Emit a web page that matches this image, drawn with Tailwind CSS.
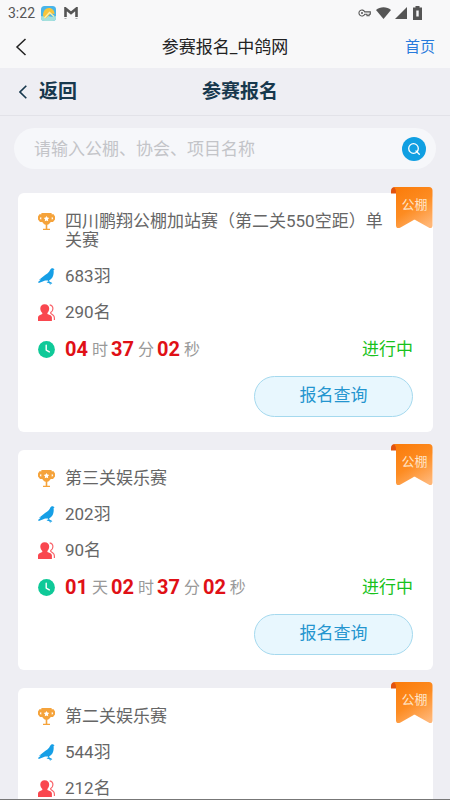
<!DOCTYPE html>
<html lang="zh-CN">
<head>
<meta charset="utf-8">
<meta name="viewport" content="width=device-width, initial-scale=1">
<title>参赛报名_中鸽网</title>
<script src="https://cdn.jsdelivr.net/npm/@tailwindcss/browser@4"></script>
</head>
<body class="flex h-screen flex-col overflow-hidden bg-[#eeeef3] font-['Roboto','Noto_Sans_CJK_SC',sans-serif] text-[17px] text-[#666]">

<svg class="absolute size-0" aria-hidden="true">
  <defs>
    <linearGradient id="ribbon-fill" x1="0.2" y1="0" x2="0.8" y2="1">
      <stop offset="0" stop-color="#fb7d0c"/><stop offset="0.5" stop-color="#fd8c22"/><stop offset="1" stop-color="#ffb676"/>
    </linearGradient>
  </defs>
  <symbol id="trophy" viewBox="0 0 17 17">
    <path fill="#f5a33b" fill-rule="evenodd" d="M3.400 0h10.200v1.200h2L17 3.600v3L15 9h-2.300c-.9 1.600-1.900 2.400-3.400 2.700v4h2.700V17H5v-1.300h2.700v-4C6.200 11.400 5.200 10.600 4.300 9H2L0 6.600v-3l1.400-2.400h2zM2.600 4.200l-.8 1.100.9 1.100h.6V4.200zM13.700 4.200v2.200h.6l.9-1.100-.8-1.100zM8.500 2.900l-.9 1.700-1.900.3 1.400 1.400-.3 2 1.700-.9 1.700.9-.3-2 1.400-1.400-1.900-.3z"/>
  </symbol>
  <symbol id="pigeon" viewBox="0 0 17 17">
    <path fill="#169fe6" d="M12.200 1.800C12.600.5 13.800 0 14.900.2l1.700 1-1 .9c.3 2.700 0 5.600-1.400 7.700-.8 1.200-1.900 2-3 2.500l.4 1.500 2 .6.700 1.500-.8-.1-.8-.8.1 1.600h-.9l-.5-1.400-2.600-.7.1-.8 1.500.1-.5-1.200c-1.500.2-3.200-.1-4.600.6L.8 14.900 0 13.900l3-2.300-2.200.3 4.700-3.700c2.500-2 5.600-3.200 6.700-6.400z"/>
  </symbol>
  <symbol id="people" viewBox="0 0 17 17">
    <path fill="#f9474f" d="M6.600.2c2.900 0 4.600 1.800 4.600 4.400 0 1.900-.7 3.400-1.800 4.400v.9l3 1.300c1.200.6 1.500 1.600 1.500 2.600v3.100H0v-3.100c0-1.200.5-2.100 1.500-2.600l2.800-1.300V9C3.100 8 2.300 6.500 2.300 4.600 2.300 2 4 .2 6.600.2z"/>
    <path fill="none" stroke="#f9656b" stroke-width="1.200" d="M11.700.9c2 .4 3.200 1.800 3.200 3.900 0 1.700-.9 3-2.200 3.800l.1.900 2.100 1.400c1 .7 1.500 1.800 1.500 3v2"/>
  </symbol>
  <symbol id="clock" viewBox="0 0 17 17">
    <circle cx="8.500" cy="8.500" r="8.400" fill="#0fc998"/>
    <path fill="none" stroke="#fff" stroke-width="1.400" stroke-linecap="round" stroke-linejoin="round" d="M8.200 4.300v4.800l3.100 1.800"/>
  </symbol>
  <symbol id="ribbon" viewBox="0 0 42 42">
    <path fill="#e2530f" d="M0 6.500V4c0-2.500 1.500-4 4-4h4v6.500z"/>
    <path fill="url(#ribbon-fill)" d="M2.500 0H38c2.200 0 3.500 1.300 3.500 3.500v35c0 2.400-2 3.200-3.800 2l-13-7.300c-.8-.5-1.600-.5-2.400 0l-12.800 7.300C7 41.700 5 41 5 38.500V6c0-3-.5-5-2.500-6z"/>
  </symbol>
</svg>

<div class="flex h-[26px] shrink-0 items-center justify-between bg-[#f8f8f9] pl-2 pr-7 text-[14px] text-[#555]">
  <div class="flex items-center gap-[6px]">
    <span class="leading-[26px]">3:22</span>
    <svg class="size-[15px]" viewBox="0 0 15 15" aria-hidden="true"><rect width="15" height="15" rx="3.500" fill="#48b5ea"/><path d="M0 10c3 1 4-1 7 0s5 1 8 0v1.500A3.500 3.500 0 0 1 11.500 15h-8A3.500 3.500 0 0 1 0 11.500z" fill="#a5e0dc"/><path d="M2 9.500c0-4.500 2.500-7.500 6-7.500 3.200 0 5.500 2.500 5.500 6L10 7.500l-5.500 5z" fill="#f7c53c"/><path d="m3.500 12 5-5.500 4.500 4" fill="none" stroke="#fff0a8" stroke-width="1.300"/></svg>
    <svg class="ml-[2px] h-3 w-[14px]" viewBox="0 0 14 12" aria-hidden="true"><path d="M1.500 10V1.500L7 6l5.500-4.500V10" fill="none" stroke="#555" stroke-width="2.600"/><path d="M.5 11.500h2M11.500 11.500h2" stroke="#aaa"/></svg>
  </div>
  <div class="flex items-center gap-1">
    <svg class="mr-px h-2 w-[13px]" viewBox="0 0 13 8" aria-hidden="true"><path d="M6.700 2.900h5.600v2.300h-1.200v1.500H9V5.200H6.700a3 3 0 1 1 0-2.300z" fill="none" stroke="#555" stroke-width="1.100"/><circle cx="4" cy="4" r="1" fill="#555"/></svg>
    <svg class="h-3 w-[15px]" viewBox="0 0 15 12" aria-hidden="true"><path d="M0 3C4-.7 11-.7 15 3L7.500 12z" fill="#555"/></svg>
    <svg class="size-3" viewBox="0 0 12 12" aria-hidden="true"><path d="M12 0v12H0z" fill="#555"/></svg>
    <svg class="ml-[2px] h-[14px] w-[9px]" viewBox="0 0 9 14" aria-hidden="true"><path fill="#555" fill-rule="evenodd" d="M2.500 0h4v1.500H9V14H0V1.500h2.500zM3.300 4.500v6h2.400v-6z"/></svg>
  </div>
</div>

<nav class="grid h-[42px] shrink-0 grid-cols-[1fr_auto_1fr] items-center bg-[#f8f8f9] px-[15px] text-[#222]">
  <button type="button" aria-label="后退" class="justify-self-start">
    <svg class="h-[18px] w-3" viewBox="0 0 12 18" fill="none" stroke="#222" stroke-width="1.500" aria-hidden="true"><path d="M10.500 1 2 9l8.500 8"/></svg>
  </button>
  <span class="leading-6">参赛报名_中鸽网</span>
  <a href="#" class="justify-self-end text-[15px] leading-6 text-[#287bdc]">首页</a>
</nav>

<header class="grid h-12 shrink-0 grid-cols-[1fr_auto_1fr] items-center border-b border-[#e2e2e8] px-[19px] text-[19px] font-bold text-[#17384d]">
  <a href="#" class="flex items-center gap-3 justify-self-start leading-6">
    <svg class="h-[14px] w-2" viewBox="0 0 8 14" fill="none" stroke="#17384d" stroke-width="1.600" aria-hidden="true"><path d="M7.300.7 1 7l6.300 6.300"/></svg>
    返回
  </a>
  <h1 class="pl-[30px] leading-6">参赛报名</h1>
</header>

<main class="min-h-0 flex-1 overflow-hidden border-b border-[#777]">
  <form class="mx-[14px] mt-3 flex h-[41px] items-center rounded-full bg-[#f6f7fa] pl-5 pr-[10px]">
    <input type="search" aria-label="搜索" placeholder="请输入公棚、协会、项目名称" class="h-full min-w-0 flex-1 bg-transparent outline-none placeholder:text-[#c3c4c8]">
    <button type="button" aria-label="搜索" class="flex size-6 items-center justify-center rounded-full bg-[#109fe2]">
      <svg class="size-3" viewBox="0 0 12 12" fill="none" stroke="#fff" stroke-width="1.300" stroke-linecap="round" aria-hidden="true"><circle cx="5.500" cy="5.500" r="4.800"/><path d="m8 8 3.300 3.300"/></svg>
    </button>
  </form>

  <div class="ml-[18px] mr-[17px] mt-6 flex flex-col gap-[18px]">
    <article class="relative rounded-md bg-white px-5 pb-[15px] pt-[19px]">
      <div class="absolute -top-[6px] right-0 size-[42px]">
        <svg class="size-full" aria-hidden="true"><use href="#ribbon"/></svg>
        <span class="absolute inset-x-0 top-[9px] pl-[5px] text-center text-[13px] leading-[18px] text-[#ffe3c4]">公棚</span>
      </div>
      <div class="flex flex-col gap-[17px] leading-[19px]">
        <div class="flex gap-[10px] pr-6"><svg class="mt-px size-[17px] shrink-0" aria-hidden="true"><use href="#trophy"/></svg><h2>四川鹏翔公棚加站赛（第二关550空距）单关赛</h2></div>
        <div class="flex items-center gap-[10px]"><svg class="size-[17px]" aria-hidden="true"><use href="#pigeon"/></svg><p>683羽</p></div>
        <div class="flex items-center gap-[10px]"><svg class="size-[17px]" aria-hidden="true"><use href="#people"/></svg><p>290名</p></div>
        <div class="flex items-center gap-[10px] leading-[21px]"><svg class="size-[17px]" aria-hidden="true"><use href="#clock"/></svg>
          <p class="flex gap-[3px] text-[16px] text-[#999]"><b class="pr-px text-[20px] text-[#e01016]">04</b>时<b class="pr-px text-[20px] text-[#e01016]">37</b>分<b class="pr-px text-[20px] text-[#e01016]">02</b>秒</p>
          <p class="ml-auto text-[#18c21c]">进行中</p></div>
      </div>
      <button type="button" class="ml-auto mt-4 block h-[41px] w-[159px] rounded-full border border-[#a5d9ee] bg-[#e8f7fe] pb-[2px] text-[#2495cf]">报名查询</button>
    </article>

    <article class="relative rounded-md bg-white px-5 pb-[15px] pt-[19px]">
      <div class="absolute -top-[6px] right-0 size-[42px]">
        <svg class="size-full" aria-hidden="true"><use href="#ribbon"/></svg>
        <span class="absolute inset-x-0 top-[9px] pl-[5px] text-center text-[13px] leading-[18px] text-[#ffe3c4]">公棚</span>
      </div>
      <div class="flex flex-col gap-[17px] leading-[19px]">
        <div class="flex gap-[10px] pr-6"><svg class="mt-px size-[17px] shrink-0" aria-hidden="true"><use href="#trophy"/></svg><h2>第三关娱乐赛</h2></div>
        <div class="flex items-center gap-[10px]"><svg class="size-[17px]" aria-hidden="true"><use href="#pigeon"/></svg><p>202羽</p></div>
        <div class="flex items-center gap-[10px]"><svg class="size-[17px]" aria-hidden="true"><use href="#people"/></svg><p>90名</p></div>
        <div class="flex items-center gap-[10px] leading-[21px]"><svg class="size-[17px]" aria-hidden="true"><use href="#clock"/></svg>
          <p class="flex gap-[3px] text-[16px] text-[#999]"><b class="pr-px text-[20px] text-[#e01016]">01</b>天<b class="pr-px text-[20px] text-[#e01016]">02</b>时<b class="pr-px text-[20px] text-[#e01016]">37</b>分<b class="pr-px text-[20px] text-[#e01016]">02</b>秒</p>
          <p class="ml-auto text-[#18c21c]">进行中</p></div>
      </div>
      <button type="button" class="ml-auto mt-4 block h-[41px] w-[159px] rounded-full border border-[#a5d9ee] bg-[#e8f7fe] pb-[2px] text-[#2495cf]">报名查询</button>
    </article>

    <article class="relative rounded-t-md bg-white px-5 pb-[15px] pt-[19px]">
      <div class="absolute -top-[6px] right-0 size-[42px]">
        <svg class="size-full" aria-hidden="true"><use href="#ribbon"/></svg>
        <span class="absolute inset-x-0 top-[9px] pl-[5px] text-center text-[13px] leading-[18px] text-[#ffe3c4]">公棚</span>
      </div>
      <div class="flex flex-col gap-[17px] leading-[19px]">
        <div class="flex gap-[10px] pr-6"><svg class="mt-px size-[17px] shrink-0" aria-hidden="true"><use href="#trophy"/></svg><h2>第二关娱乐赛</h2></div>
        <div class="flex items-center gap-[10px]"><svg class="size-[17px]" aria-hidden="true"><use href="#pigeon"/></svg><p>544羽</p></div>
        <div class="flex items-center gap-[10px]"><svg class="size-[17px]" aria-hidden="true"><use href="#people"/></svg><p>212名</p></div>
      </div>
    </article>
  </div>
</main>
</body>
</html>
